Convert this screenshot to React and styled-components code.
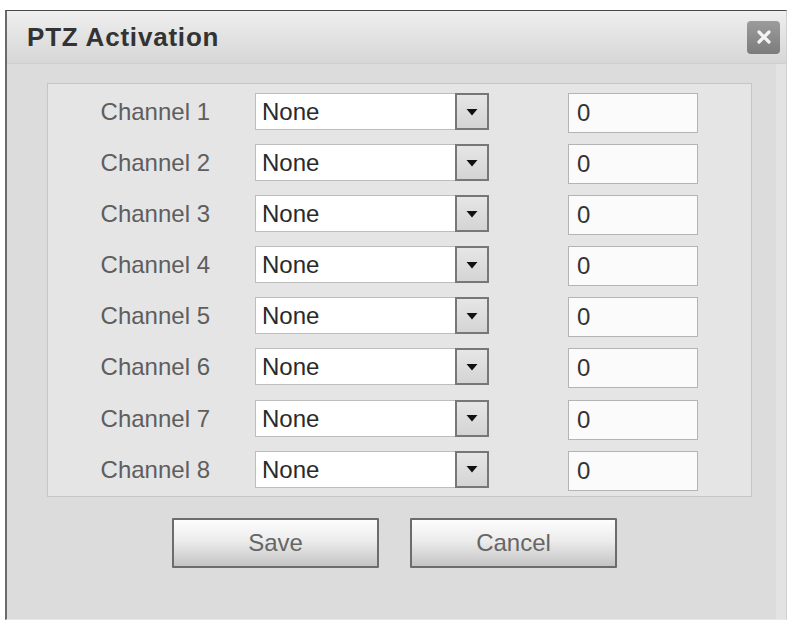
import React from "react";
import styled, { createGlobalStyle } from "styled-components";

const GlobalStyle = createGlobalStyle`
	html, body {
		margin: 0;
		padding: 0;
		background: #ffffff;
		font-family: "Liberation Sans", Arial, sans-serif;
	}
`;

const Dialog = styled.div`
	box-sizing: border-box;
	margin: 10px 0 0 5px;
	width: 782px;
	height: 610px;
	display: flex;
	flex-direction: column;
	background: #dcdcdc;
	border-top: 1px solid #4a4a4a;
	border-left: 2px solid #6a6a6a;
	border-right: 1px solid #d0d0d0;
	border-bottom: 1px solid #e8e8e8;
`;

const TitleBar = styled.div`
	height: 52px;
	display: flex;
	align-items: center;
	justify-content: space-between;
	padding: 0 6px 0 20px;
	background: linear-gradient(#efefef, #d6d6d6);
	border-bottom: 1px solid #cfcfcf;
`;

const Title = styled.h2`
	margin: 0;
	font-size: 26px;
	font-weight: 700;
	letter-spacing: 0.8px;
	color: #333333;
`;

const CloseButton = styled.button`
	width: 33px;
	height: 33px;
	padding: 0;
	border: none;
	border-radius: 4px;
	background: linear-gradient(#9c9c9c, #7c7c7c);
	display: flex;
	align-items: center;
	justify-content: center;
	cursor: pointer;
`;

const Body = styled.div`
	flex: 1;
	display: flex;
	flex-direction: column;
	padding: 19px 14px 0 40px;
	border-right: 10px solid #e3e3e3;
`;

const Panel = styled.div`
	box-sizing: border-box;
	width: 705px;
	display: grid;
	grid-auto-rows: 40px;
	row-gap: 11.1px;
	padding: 9px 0 5px;
	background: #e5e5e5;
	border: 1px solid #c6c6c6;
`;

const Row = styled.div`
	display: flex;
	align-items: flex-start;
`;

const Label = styled.label`
	box-sizing: border-box;
	width: 207px;
	padding-right: 45px;
	text-align: right;
	line-height: 37px;
	font-size: 24px;
	color: #5e5e5e;
`;

const Select = styled.div`
	box-sizing: border-box;
	width: 234px;
	height: 37px;
	display: flex;
	align-items: stretch;
	background: #ffffff;
	border: 1px solid #bdbdbd;
	border-right: none;
	margin-right: 79px;
`;

const SelectValue = styled.span`
	flex: 1;
	padding-left: 6px;
	line-height: 35px;
	font-size: 24px;
	color: #2a2a2a;
`;

const ArrowButton = styled.span`
	box-sizing: border-box;
	width: 34px;
	margin: -1px 0;
	display: flex;
	align-items: center;
	justify-content: center;
	background: linear-gradient(#e6e6e6, #d4d4d4);
	border: 2px solid #777777;
`;

const NumberInput = styled.input`
	box-sizing: border-box;
	width: 130px;
	height: 40px;
	padding: 0 0 0 8px;
	background: #fbfbfb;
	border: 1px solid #b4b4b4;
	font-family: "Liberation Sans", Arial, sans-serif;
	font-size: 24px;
	color: #333333;
	outline: none;
`;

const Buttons = styled.div`
	display: flex;
	justify-content: center;
	gap: 31px;
	margin-top: 21px;
	padding-right: 20px;
`;

const Button = styled.button`
	box-sizing: border-box;
	width: 207px;
	height: 50px;
	border: 2px solid #6c6c6c;
	border-radius: 1px;
	background: linear-gradient(#fdfdfd 0%, #ececec 45%, #c4c4c4 100%);
	font-family: "Liberation Sans", Arial, sans-serif;
	font-size: 24px;
	color: #666666;
	cursor: pointer;
`;

const channels = [1, 2, 3, 4, 5, 6, 7, 8];

const App = () => {
	return (
		<>
			<GlobalStyle />
			<Dialog>
				<TitleBar>
					<Title>PTZ Activation</Title>
					<CloseButton aria-label='Close'>
						<svg width='18' height='18' viewBox='0 0 18 18'>
							<path
								d='M4 4 L14 14 M14 4 L4 14'
								stroke='#f4f4f4'
								strokeWidth='3.2'
								strokeLinecap='round'
							/>
						</svg>
					</CloseButton>
				</TitleBar>
				<Body>
					<Panel>
						{channels.map((n) => (
							<Row key={n}>
								<Label>Channel {n}</Label>
								<Select>
									<SelectValue>None</SelectValue>
									<ArrowButton>
										<svg width='12' height='8' viewBox='0 0 12 8'>
											<path d='M0.5 1 H11.5 L6 7.5 Z' fill='#111111' />
										</svg>
									</ArrowButton>
								</Select>
								<NumberInput type='text' defaultValue='0' />
							</Row>
						))}
					</Panel>
					<Buttons>
						<Button type='button'>Save</Button>
						<Button type='button'>Cancel</Button>
					</Buttons>
				</Body>
			</Dialog>
		</>
	);
};

export default App;
